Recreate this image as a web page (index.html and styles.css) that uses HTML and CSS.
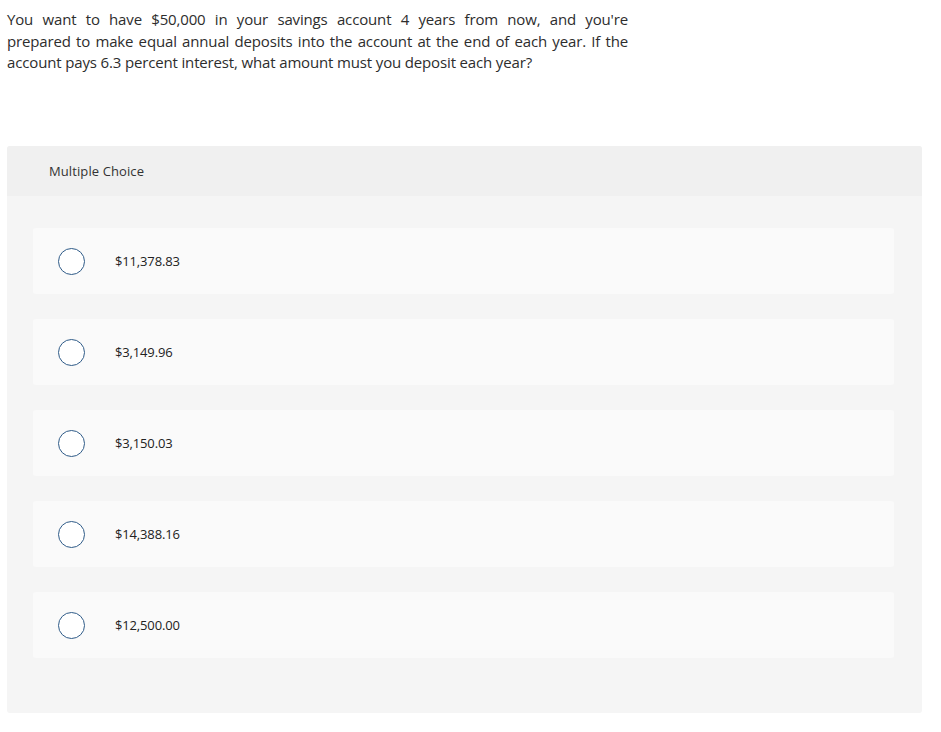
FILE: index.html
```html
<!DOCTYPE html>
<html>
<head>
<meta charset="utf-8">
<link rel="stylesheet" href="styles.css">
</head>
<body>
<p class="question"><span class="line">You want to have $50,000 in your savings account 4 years from now, and you're</span> <span class="line">prepared to make equal annual deposits into the account at the end of each year. If the</span> <span class="line last">account pays 6.3 percent interest, what amount must you deposit each year?</span></p>
<div class="panel">
  <div class="panel-head">Multiple Choice</div>
  <div class="panel-body">
    <div class="choice"><span class="radio"></span><span class="label">$11,378.83</span></div>
    <div class="choice"><span class="radio"></span><span class="label">$3,149.96</span></div>
    <div class="choice"><span class="radio"></span><span class="label">$3,150.03</span></div>
    <div class="choice"><span class="radio"></span><span class="label">$14,388.16</span></div>
    <div class="choice"><span class="radio"></span><span class="label">$12,500.00</span></div>
  </div>
</div>
</body>
</html>
```
FILE: styles.css
```css
html, body { margin: 0; padding: 0; background: #fff; }
body {
  font-family: "Open Sans", "Noto Sans", sans-serif;
  color: #333;
  padding: 9px 7px 0 7px;
}
.question {
  margin: 0;
  width: 621px;
  font-size: 15px;
  letter-spacing: -0.15px;
  line-height: 21.5px;
  color: #2d2d2d;
}
.line {
  display: block;
  text-align: justify;
  text-align-last: justify;
  white-space: nowrap;
}
.line.last {
  text-align-last: left;
}
.panel {
  margin-top: 72.5px;
  width: 915px;
  background: #f5f5f5;
  border-radius: 3px;
}
.panel-head {
  height: 50px;
  background: #f0f0f0;
  border-radius: 3px 3px 0 0;
  display: flex;
  align-items: center;
  padding-left: 42px;
  font-size: 13px;
  letter-spacing: 0.1px;
  color: #333;
}
.panel-body {
  display: flex;
  flex-direction: column;
  gap: 25px;
  padding: 32px 28px 55px 26px;
}
.choice {
  height: 66px;
  background: #fafafa;
  border-radius: 3px;
  display: flex;
  align-items: center;
  padding-left: 25px;
}
.radio {
  width: 25px;
  height: 25px;
  border: 1.5px solid #2f5b88;
  border-radius: 50%;
  background: #fff;
  flex: none;
}
.label {
  margin-left: 30px;
  font-size: 13px;
  letter-spacing: -0.15px;
  color: #222;
}
```
